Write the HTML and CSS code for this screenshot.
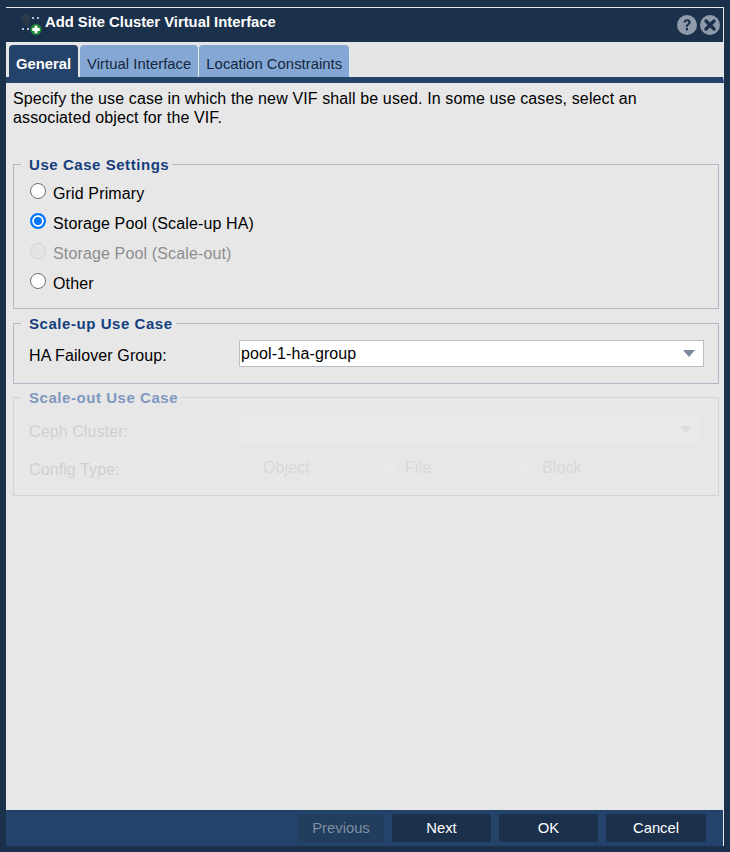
FILE: index.html
```html
<!DOCTYPE html>
<html lang="en">
<head>
<meta charset="utf-8">
<title>Add Site Cluster Virtual Interface</title>
<link rel="stylesheet" href="styles.css">
</head>
<body>
<div class="window">
  <header class="titlebar">
    <svg class="title-icon" width="28" height="24" viewBox="0 0 28 24" aria-hidden="true">
      <circle cx="7" cy="7" r="4.5" fill="#2c3a49"/>
      <circle cx="8" cy="13" r="2.5" fill="#2c3a49"/>
      <g fill="#b9c2cc">
        <rect x="13" y="6" width="2" height="2"/><rect x="18" y="6" width="2" height="2"/>
        <rect x="3" y="17" width="2" height="2"/><rect x="8" y="17" width="2" height="2"/>
      </g>
      <circle cx="17" cy="18.5" r="5.5" fill="#1f8a36"/>
      <path d="M15.6 14.8h2.8v2.3h2.3v2.8h-2.3v2.3h-2.8v-2.3h-2.3v-2.8h2.3z" fill="#fff"/>
    </svg>
    <span class="title-text">Add Site Cluster Virtual Interface</span>
    <div class="title-tools">
      <svg width="20" height="20" viewBox="0 0 20 20" aria-hidden="true">
        <circle cx="10" cy="10" r="10" fill="#8f9bab"/>
        <path d="M6.6 7.6c0-2.2 1.5-3.4 3.6-3.4s3.5 1.2 3.5 3c0 1.4-.8 2.1-1.7 2.8-.8.6-1.1 1-1.1 1.9H8.8c0-1.5.5-2.2 1.4-2.9.7-.5 1.2-1 1.2-1.6 0-.7-.5-1.1-1.2-1.1-.8 0-1.3.5-1.4 1.3z" fill="#1b304b"/>
        <rect x="8.8" y="13" width="2.2" height="2.4" fill="#1b304b"/>
      </svg>
      <svg width="20" height="20" viewBox="0 0 20 20" aria-hidden="true">
        <circle cx="10" cy="10" r="10" fill="#8f9bab"/>
        <path d="M6 6l8 8M14 6l-8 8" stroke="#1b304b" stroke-width="3.4" stroke-linecap="round"/>
      </svg>
    </div>
  </header>

  <nav class="tabs">
    <div class="tab tab-active">General</div>
    <div class="tab tab-second">Virtual Interface</div>
    <div class="tab">Location Constraints</div>
  </nav>

  <main class="content">
    <p class="intro">Specify the use case in which the new VIF shall be used. In some use cases, select an associated object for the VIF.</p>

    <fieldset class="group group-usecase">
      <legend>Use Case Settings</legend>
      <div class="radio-row"><span class="radio"></span><span>Grid Primary</span></div>
      <div class="radio-row"><span class="radio radio-checked"></span><span>Storage Pool (Scale-up HA)</span></div>
      <div class="radio-row radio-row-disabled"><span class="radio radio-disabled"></span><span>Storage Pool (Scale-out)</span></div>
      <div class="radio-row"><span class="radio"></span><span>Other</span></div>
    </fieldset>

    <fieldset class="group group-scaleup">
      <legend>Scale-up Use Case</legend>
      <div class="field-row">
        <span class="field-label">HA Failover Group:</span>
        <div class="select"><span>pool-1-ha-group</span><i class="arrow"></i></div>
      </div>
    </fieldset>

    <fieldset class="group group-scaleout">
      <legend>Scale-out Use Case</legend>
      <div class="faded">
        <div class="field-row">
          <span class="field-label">Ceph Cluster:</span>
          <div class="select select-faded"><i class="arrow"></i></div>
        </div>
        <div class="field-row config-row">
          <span class="field-label">Config Type:</span>
          <div class="config-options">
            <span class="config-option"><i class="radio-ghost"></i>Object</span>
            <span class="config-option"><i class="radio-ghost"></i>File</span>
            <span class="config-option"><i class="radio-ghost"></i>Block</span>
          </div>
        </div>
      </div>
    </fieldset>
  </main>

  <footer class="footer">
    <button class="btn btn-disabled" type="button">Previous</button>
    <button class="btn" type="button">Next</button>
    <button class="btn" type="button">OK</button>
    <button class="btn btn-wide" type="button">Cancel</button>
  </footer>
</div>
</body>
</html>
```
FILE: styles.css
```css
* { box-sizing: border-box; }
html, body { margin: 0; height: 100%; }
body {
  background: #1b304b;
  font-family: "Liberation Sans", Arial, sans-serif;
  font-size: 16px;
  color: #000;
  overflow: hidden;
}
.window {
  height: 852px;
  padding: 7px 6px 6px 6px;
  display: flex;
  flex-direction: column;
}
.titlebar {
  height: 35px;
  flex: none;
  border-top: 1px solid #e8ebee;
  border-right: 1px solid #e8ebee;
  background: #1b304b;
  display: flex;
  align-items: center;
  padding-left: 13px;
  color: #fff;
}
.title-icon { margin-top: -4px; margin-right: -2px; flex: none; }
.title-text { font-weight: bold; font-size: 14.8px; margin-top: -6px; }
.title-tools { margin-left: auto; display: flex; gap: 3px; padding-right: 3px; margin-top: -1px; }
.tabs {
  flex: none;
  height: 41px;
  background: #e5e6e7;
  border-right: 1px solid #e8ebee;
  border-bottom: 6px solid #24436a;
  padding: 3px 0 0 3px;
  display: flex;
  gap: 1px;
}
.tab {
  height: 32px;
  background: #84a8d3;
  border-radius: 4px 4px 0 0;
  padding: 11px 7px 0 7px;
  font-size: 14.8px;
  line-height: 16px;
  letter-spacing: 0.05px;
  color: #14263e;
  white-space: nowrap;
}
.tab-second { margin-left: 1px; }
.tab-active {
  background: #24436a;
  color: #fff;
  font-weight: bold;
  letter-spacing: 0;
}
.content {
  flex: 1;
  background: #e7e7e7;
  border-right: 1px solid #e8ebee;
  padding: 6px 4px 0 7px;
}
.intro {
  margin: 0;
  font-size: 16px;
  line-height: 19px;
  letter-spacing: 0.12px;
  max-width: 660px;
}
.group {
  margin: 0;
  min-width: 0;
  border: 1px solid #b3b8c8;
  padding: 0 14px 0 15px;
}
.group legend {
  padding: 0 3px 0 8px;
  margin-left: -8px;
  font-weight: bold;
  font-size: 15px;
  line-height: 17px;
  letter-spacing: 0.55px;
  color: #153e7e;
}
.group-usecase { margin-top: 29px; height: 153px; padding-top: 8px; }
.group-scaleup { margin-top: 6px; height: 69px; padding-top: 8px; }
.group-scaleout { margin-top: 5px; height: 107px; padding-top: 10px; border-color: #d0d3db; }
.group-scaleout legend { color: #7f98bf; }
.faded { opacity: 0.1; }
.radio-row {
  height: 30px;
  display: flex;
  align-items: center;
  gap: 7px;
  letter-spacing: 0.14px;
  margin-top: -2px;
  margin-bottom: 2px;
}
.radio-row-disabled { color: #8d8d8d; }
.radio {
  width: 16px;
  height: 16px;
  margin: -7px 0 0 1px;
  border-radius: 50%;
  border: 1.5px solid #6e6e6e;
  background: #fff;
  flex: none;
}
.radio-checked {
  border: 2px solid #0075ff;
  box-shadow: inset 0 0 0 2px #fff;
  background: #0075ff;
}
.radio-disabled { border-color: #d3d3d3; background: #e4e4e4; }
.field-row { display: flex; align-items: center; height: 27px; letter-spacing: 0.1px; }
.field-label { width: 210px; flex: none; padding-top: 5px; }
.select {
  flex: 1;
  height: 27px;
  background: #fff;
  border: 1px solid #b9bdc6;
  padding: 1px 1px;
  line-height: 22px;
  display: flex;
  align-items: center;
}
.arrow {
  width: 0;
  height: 0;
  margin-left: auto;
  margin-right: 7px;
  border-left: 6px solid transparent;
  border-right: 6px solid transparent;
  border-top: 7px solid #7c8a9b;
}
.select-faded { border-color: #fff; margin-right: 3px; }
.config-row { margin-top: 11px; }
.config-options {
  display: grid;
  grid-template-columns: 142px 137px auto;
  padding-left: 2px;
}
.config-option { display: flex; align-items: center; gap: 8px; color: #555; }
.radio-ghost { width: 14px; height: 14px; border-radius: 50%; background: #fff; margin-top: -6px; }
.footer {
  flex: none;
  height: 36px;
  background: #24436a;
  border-right: 1px solid #e8ebee;
  display: flex;
  justify-content: flex-end;
  gap: 8px;
  padding: 4px 17px 0 0;
}
.btn {
  width: 99px;
  height: 28px;
  padding: 0;
  border: 0;
  border-radius: 3px;
  background: #1b304b;
  color: #fff;
  font-family: inherit;
  font-size: 14.8px;
}
.btn-wide { width: 100px; }
.btn-disabled {
  width: 86px;
  background: #223d5e;
  color: #7f8ea1;
}
```
